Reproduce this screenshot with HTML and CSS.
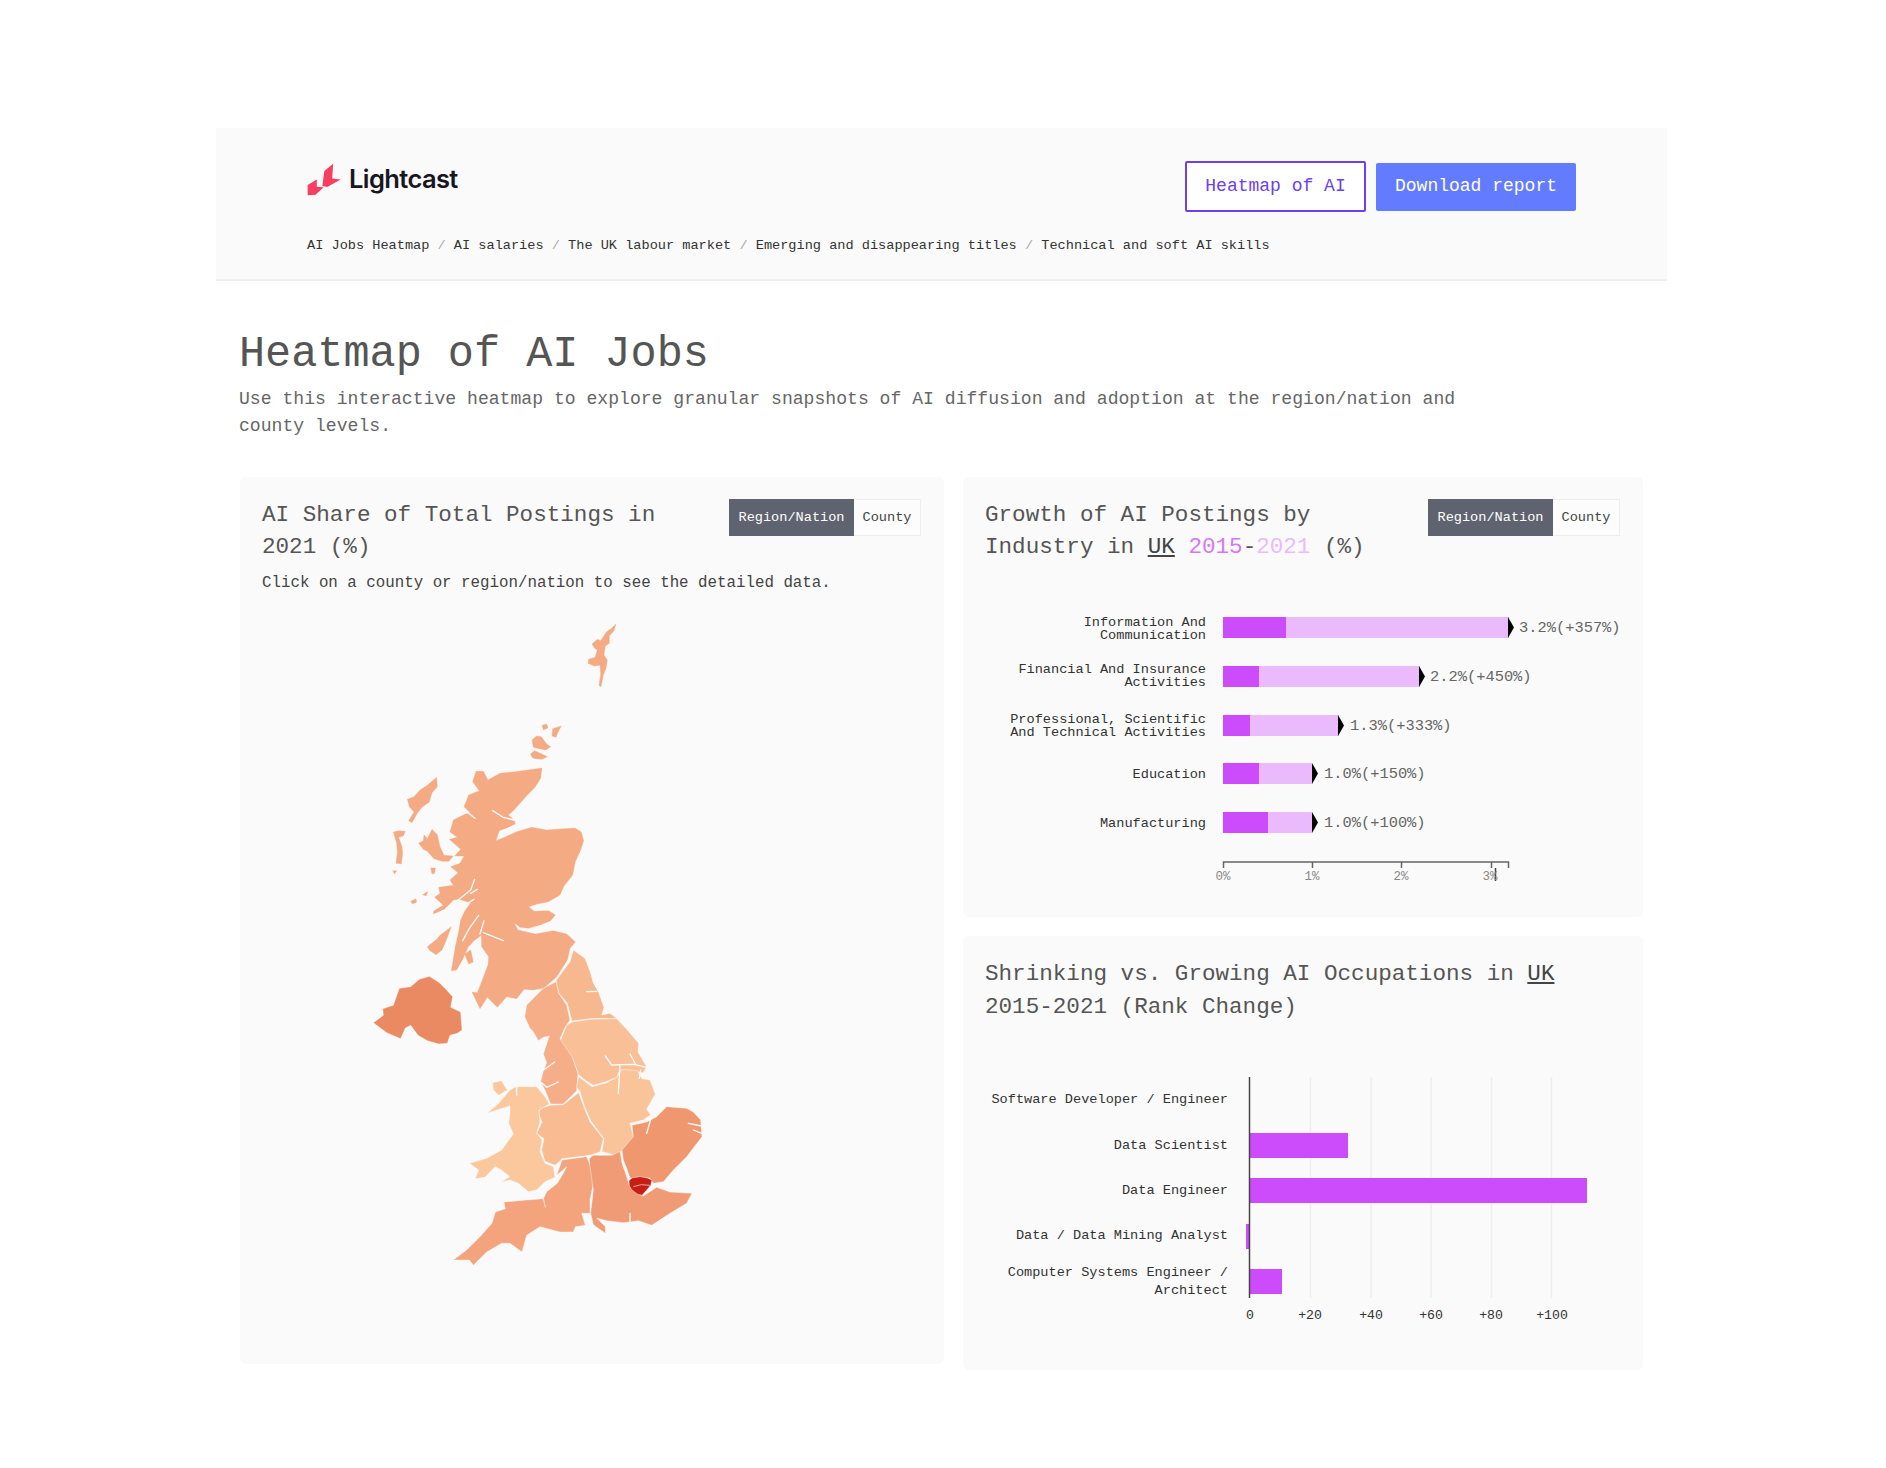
FILE: index.html
```html
<!DOCTYPE html>
<html lang="en">
<head>
<meta charset="utf-8">
<title>Heatmap of AI Jobs</title>
<link rel="stylesheet" href="styles.css">
</head>
<body>
<div class="page">
  <header class="site-header">
    <div class="header-top">
      <a class="logo" href="#">
        <svg class="logo-mark" viewBox="50 38 104 100" aria-hidden="true">
          <polygon points="52,105 80,88 80,110 101,112 76,135 52,136"/>
          <polygon points="130,40 127,85 153,88 112,111 97,108 103,62"/>
        </svg>
        <span class="logo-text">Lightcast</span>
      </a>
      <div class="header-actions">
        <a class="btn btn-outline" href="#">Heatmap of AI</a>
        <a class="btn btn-solid" href="#">Download report</a>
      </div>
    </div>
    <nav class="crumbs"><a href="#">AI Jobs Heatmap</a><span class="sep"> / </span><a href="#">AI salaries</a><span class="sep"> / </span><a href="#">The UK labour market</a><span class="sep"> / </span><a href="#">Emerging and disappearing titles</a><span class="sep"> / </span><a href="#">Technical and soft AI skills</a></nav>
  </header>

  <main class="content">
    <h1 class="page-title">Heatmap of AI Jobs</h1>
    <p class="intro">Use this interactive heatmap to explore granular snapshots of AI diffusion and adoption at the region/nation and county levels.</p>

    <div class="dashboard">
      <section class="panel panel-map">
        <div class="panel-head">
          <h2 class="panel-title">AI Share of Total Postings in 2021 (%)</h2>
          <div class="toggle"><span class="toggle-on">Region/Nation</span><span class="toggle-off">County</span></div>
        </div>
        <p class="hint">Click on a county or region/nation to see the detailed data.</p>
        <svg class="map" viewBox="262 610 660 680" aria-label="Map of UK regions">
          <g transform="translate(340,600) scale(0.33333)" class="land">
            <!-- Shetland & Orkney -->
            <path class="r-sct" d="M828,72 L822,92 L808,108 L808,130 L796,138 L792,165 L802,180 L798,205 L790,225 L783,260 L777,256 L782,222 L780,196 L762,198 L744,190 L746,178 L765,172 L772,150 L764,145 L756,132 L772,118 L782,122 L790,110 L800,95 L815,85 Z"/>
            <path class="r-sct" d="M576,420 L590,408 L604,410 L620,432 L632,440 L618,450 L596,446 L580,442 Z M571,462 L584,452 L606,462 L622,470 L606,478 L586,476 L578,474 Z M606,376 L620,372 L624,384 L610,390 Z M638,386 L664,378 L656,392 L648,412 L636,408 Z"/>
            <!-- Hebrides -->
            <path class="r-sct" d="M202,598 L222,590 L240,570 L262,556 L290,532 L292,560 L276,578 L268,606 L246,622 L232,640 L216,668 L206,662 L222,636 L208,620 Z"/>
            <path class="r-sct" d="M160,696 L176,692 L196,694 L190,708 L176,712 L186,740 L188,762 L184,792 L168,790 L172,758 L170,730 Z"/>
            <path class="r-sct" d="M236,730 L250,722 L252,704 L262,716 L276,688 L292,704 L300,740 L312,766 L340,768 L326,784 L306,784 L282,776 L262,754 L250,748 Z M272,804 L286,804 L284,820 L276,822 Z M158,812 L170,812 L164,822 Z"/>
            <path class="r-sct" d="M212,904 L228,896 L230,906 L218,912 Z M248,884 L264,874 L258,888 Z"/>
            <!-- Mainland Scotland -->
            <path class="r-sct" d="M606,504 L602,535 L585,562 L562,585 L540,610 L520,632 L505,645 L522,660 L526,672 L500,684 L478,692 L468,722 L498,710 L530,695 L575,682 L620,690 L672,686 L705,684 L724,696 L731,722 L722,750 L706,785 L698,825 L672,858 L660,885 L625,905 L592,912 L566,920 L582,934 L626,932 L646,945 L632,962 L600,975 L565,985 L540,982 L522,968 L534,990 L586,1002 L640,992 L680,1002 L706,1026 L690,1045 L682,1080 L650,1130 L612,1164 L580,1170 L552,1168 L530,1196 L500,1190 L472,1222 L442,1192 L420,1226 L396,1176 L412,1178 L425,1145 L444,1095 L446,1070 L425,1040 L424,1006 L402,1022 L384,1042 L368,1078 L350,1110 L334,1112 L346,1040 L356,995 L362,960 L375,932 L392,908 L356,898 L340,900 L316,926 L280,942 L282,932 L310,916 L284,892 L300,880 L296,862 L340,856 L330,840 L354,818 L332,800 L360,790 L372,768 L344,768 L362,748 L328,718 L352,712 L330,696 L340,660 L376,642 L392,640 L372,620 L386,585 L418,572 L398,545 L408,514 L430,514 L444,540 L480,520 L520,516 Z"/>
            <path class="slit" d="M490,1022 L430,998 M432,962 L420,1002 M416,946 L388,985 L368,1022 M404,838 L392,870 L352,902 L318,925 M412,868 L392,880 M402,898 L362,922 M405,655 L376,632 M458,632 L490,652 L522,660"/>
            <path class="r-sct" d="M262,1040 L290,1018 L300,1006 L334,980 L320,1018 L306,1050 L288,1064 L270,1052 Z M374,1062 L392,1050 L400,1086 L386,1092 Z"/>
            <!-- Northern Ireland -->
            <path class="r-ni" d="M100,1268 L130,1246 L128,1226 L160,1216 L178,1165 L212,1160 L238,1138 L268,1129 L298,1148 L318,1168 L338,1190 L332,1222 L362,1236 L366,1290 L352,1300 L330,1306 L322,1330 L296,1332 L262,1322 L234,1306 L212,1276 L196,1284 L182,1316 L140,1298 Z"/>
          </g>
          <g transform="translate(430,950) scale(0.33333)" class="land">
            <path class="r-ne" d="M420,35 L430,0 L465,25 L482,70 L490,100 L505,125 L522,172 L515,195 L540,190 L560,205 L480,206 L426,213 L412,160 L386,128 L378,92 Z"/>
            <path class="r-nw" d="M340,115 L378,95 L386,130 L410,165 L420,210 L405,232 L390,266 L420,300 L444,370 L440,422 L400,462 L362,462 L345,420 L332,395 L340,362 L350,338 L340,312 L358,258 L340,262 L325,272 L310,245 L300,235 L284,200 L290,165 Z"/>
            <path class="r-yo" d="M426,216 L480,208 L560,206 L592,240 L626,280 L624,306 L650,350 L640,368 L570,360 L560,382 L528,395 L490,406 L465,390 L446,374 L426,320 L392,270 L410,226 Z"/>
            <path class="r-em" d="M446,380 L486,410 L530,398 L560,382 L575,358 L622,362 L636,386 L660,390 L676,432 L650,478 L662,494 L640,510 L600,520 L610,560 L590,595 L552,614 L516,605 L522,566 L482,512 L464,470 L450,425 L440,410 Z"/>
            <path class="r-wm" d="M330,476 L360,466 L400,464 L446,428 L462,472 L480,516 L520,566 L510,606 L478,616 L396,626 L376,646 L345,634 L335,600 L342,566 L320,550 L336,516 L326,490 Z"/>
            <path class="r-wa" d="M188,398 L214,392 L232,420 L206,436 L190,420 Z"/>
            <path class="r-wa" d="M172,490 L206,460 L240,420 L258,410 L320,410 L345,440 L358,462 L326,480 L330,515 L320,550 L336,570 L330,605 L345,640 L370,650 L375,682 L345,695 L320,720 L295,725 L265,700 L240,690 L212,696 L240,680 L214,660 L195,650 L165,682 L135,686 L146,660 L118,640 L170,625 L215,600 L250,552 L236,520 L240,490 L240,468 L200,480 Z"/>
            <path class="r-sw" d="M346,772 L340,746 L350,725 L382,700 L400,670 L410,650 L380,676 L396,630 L470,620 L482,650 L490,700 L480,750 L480,790 L455,790 L466,826 L436,830 L430,846 L390,846 L330,830 L290,856 L276,906 L240,880 L215,880 L170,906 L130,946 L118,930 L70,930 L110,900 L150,860 L186,820 L196,786 L226,776 L222,756 L290,750 L340,746 Z"/>
            <path class="r-se" d="M490,616 L546,616 L570,604 L576,640 L590,680 L600,712 L640,738 L680,712 L720,726 L786,730 L770,760 L720,790 L665,826 L625,812 L600,816 L580,818 L530,812 L500,804 L526,830 L526,850 L490,824 L482,790 L490,720 L480,650 L478,625 Z"/>
            <path class="r-ee" d="M606,526 L650,516 L680,500 L710,470 L770,475 L790,486 L812,510 L816,560 L770,620 L730,660 L700,695 L670,700 L660,684 L600,684 L590,655 L580,630 L576,600 L610,560 Z"/>
            <path class="r-lo" d="M597,692 L606,684 L630,680 L652,684 L666,690 L662,706 L652,718 L636,736 L622,732 L606,720 L598,708 Z"/>
            <path class="river" d="M610,710 L634,704 L660,706"/>
            <path class="slit" d="M470,125 L500,124 M526,318 L545,345 L612,343 L650,352 M570,345 L565,430 M600,312 L618,345 M632,360 L628,385 M665,498 L650,550 M338,362 L374,336 M335,398 L350,412 L385,396 M260,412 L260,436 M775,520 L815,528 M790,540 L815,550 M600,816 L600,790"/>
          </g>
        </svg>
      </section>

      <div class="side">
        <section class="panel">
          <div class="panel-head">
            <h2 class="panel-title">Growth of AI Postings by Industry in <u>UK</u> <span class="y2015">2015</span>-<span class="y2021">2021</span> (%)</h2>
            <div class="toggle"><span class="toggle-on">Region/Nation</span><span class="toggle-off">County</span></div>
          </div>
          <svg class="chart chart-growth" viewBox="985 600 636 300" aria-label="Growth of AI postings">
            <g class="label">
              <text x="1206" y="626">Information And</text><text x="1206" y="638.5">Communication</text>
              <text x="1206" y="673">Financial And Insurance</text><text x="1206" y="685.5">Activities</text>
              <text x="1206" y="723">Professional, Scientific</text><text x="1206" y="735.5">And Technical Activities</text>
              <text x="1206" y="777.5">Education</text>
              <text x="1206" y="827">Manufacturing</text>
            </g>
            <g class="bar-light">
              <rect x="1223" y="617" width="286" height="21"/>
              <rect x="1223" y="666" width="197" height="21"/>
              <rect x="1223" y="715" width="116" height="21"/>
              <rect x="1223" y="763" width="89" height="21"/>
              <rect x="1223" y="812" width="89" height="21"/>
            </g>
            <g class="bar-dark">
              <rect x="1223" y="617" width="63" height="21"/>
              <rect x="1223" y="666" width="36" height="21"/>
              <rect x="1223" y="715" width="27" height="21"/>
              <rect x="1223" y="763" width="36" height="21"/>
              <rect x="1223" y="812" width="45" height="21"/>
            </g>
            <g class="marker">
              <polygon points="1508,617 1514,627.5 1508,638"/>
              <polygon points="1419,666 1425,676.5 1419,687"/>
              <polygon points="1338,715 1344,725.5 1338,736"/>
              <polygon points="1312,763 1318,773.5 1312,784"/>
              <polygon points="1312,812 1318,822.5 1312,833"/>
            </g>
            <g class="value">
              <text x="1519" y="632">3.2%(+357%)</text>
              <text x="1430" y="681">2.2%(+450%)</text>
              <text x="1350" y="730">1.3%(+333%)</text>
              <text x="1324" y="778">1.0%(+150%)</text>
              <text x="1324" y="827">1.0%(+100%)</text>
            </g>
            <path class="axis" d="M1223.5,868 V862 H1508.5 V868 M1312.5,862 V868 M1401.5,862 V868 M1491.5,862 V868"/>
            <path class="axis-mark" d="M1495.5,868 V881"/>
            <g class="tick">
              <text x="1223" y="880">0%</text><text x="1312" y="880">1%</text><text x="1401" y="880">2%</text><text x="1490" y="880">3%</text>
            </g>
          </svg>
        </section>

        <section class="panel">
          <h2 class="panel-title panel-title-wide">Shrinking vs. Growing AI Occupations in <u>UK</u> 2015-2021 (Rank Change)</h2>
          <svg class="chart chart-rank" viewBox="985 1060 636 290" aria-label="Rank change of AI occupations">
            <path class="grid" d="M1310.5,1076 V1297 M1371,1076 V1297 M1431,1076 V1297 M1491.5,1076 V1297 M1551.5,1076 V1297"/>
            <g class="bar-dark">
              <rect x="1250" y="1132" width="98" height="25"/>
              <rect x="1250" y="1177" width="337" height="25"/>
              <rect x="1246" y="1223" width="4" height="25"/>
              <rect x="1250" y="1268" width="32" height="25"/>
            </g>
            <path class="baseline" d="M1249.5,1076 V1297"/>
            <g class="label">
              <text x="1228" y="1102">Software Developer / Engineer</text>
              <text x="1228" y="1148">Data Scientist</text>
              <text x="1228" y="1193">Data Engineer</text>
              <text x="1228" y="1238">Data / Data Mining Analyst</text>
              <text x="1228" y="1275">Computer Systems Engineer /</text>
              <text x="1228" y="1293">Architect</text>
            </g>
            <g class="tick tick-dark">
              <text x="1250" y="1318">0</text><text x="1310" y="1318">+20</text><text x="1371" y="1318">+40</text><text x="1431" y="1318">+60</text><text x="1491" y="1318">+80</text><text x="1552" y="1318">+100</text>
            </g>
          </svg>
        </section>
      </div>
    </div>
  </main>
</div>
</body>
</html>
```
FILE: styles.css
```css
* { box-sizing: border-box; }

html, body { margin: 0; background: #fff; }

body {
  font-family: "Liberation Mono", "DejaVu Sans Mono", monospace;
  color: #555;
}

a { color: inherit; text-decoration: none; }

.page {
  width: 1451px;
  margin: 128px 0 0 216px;
  padding-bottom: 99px;
}

.site-header {
  background: #fafafa;
  border-bottom: 2px solid #efefef;
  padding: 33px 91px 23px;
}

.header-top {
  display: flex;
  justify-content: space-between;
  align-items: flex-start;
}

.logo {
  display: flex;
  align-items: center;
  gap: 8px;
  height: 34px;
  margin-top: 1px;
}

.logo-mark { width: 34px; height: 33px; fill: #f73f62; }

.logo-text {
  font-family: Inter, "Liberation Sans", sans-serif;
  font-weight: 600;
  font-size: 25.5px;
  letter-spacing: -0.6px;
  padding-bottom: 2px;
  color: #17171f;
}

.header-actions { display: flex; align-items: center; gap: 10px; }

.btn {
  display: flex;
  align-items: center;
  justify-content: center;
  padding-bottom: 1px;
  font-size: 18px;
  border-radius: 2px;
}

.btn-outline {
  width: 181px;
  height: 51px;
  border: 2px solid #6a40f2;
  color: #6a40f2;
  background: #fff;
}

.btn-solid {
  width: 200px;
  height: 48px;
  background: #637bff;
  color: #fff;
}

.crumbs {
  margin-top: 24px;
  font-size: 13.6px;
  line-height: 20px;
  color: #333;
  white-space: nowrap;
}

.sep { color: #aaa; }

.content { padding: 44px 23px 0 23px; }

.page-title {
  margin: 0;
  font-size: 43.5px;
  font-weight: 400;
  line-height: 60px;
  color: #555;
}

.intro {
  margin: 1px 0 0;
  max-width: 1240px;
  font-size: 18.1px;
  line-height: 26.5px;
  color: #666;
}

.dashboard {
  display: grid;
  grid-template-columns: 704px 680px;
  gap: 19px;
  align-items: start;
  margin: 38px 0 0 1px;
}

.side { display: flex; flex-direction: column; gap: 19px; }

.panel {
  background: #fafafa;
  border-radius: 6px;
  padding: 22px 23px 17px 22px;
}

.panel-map { padding-bottom: 74px; }

.panel-head {
  display: flex;
  justify-content: space-between;
  align-items: flex-start;
  gap: 20px;
}

.panel-title {
  margin: 0;
  max-width: 400px;
  font-size: 22.6px;
  font-weight: 400;
  line-height: 32px;
  color: #555;
}

.panel-title-wide { max-width: none; line-height: 33px; }

.panel-title u { color: #444; }

.y2015 { color: #d876fa; }
.y2021 { color: #ebbafc; }

.toggle {
  display: flex;
  flex: none;
  height: 37px;
  font-size: 13.6px;
  line-height: 37px;
  text-align: center;
}

.toggle-on {
  width: 125px;
  background: #5f6370;
  color: #fff;
}

.toggle-off {
  width: 67px;
  background: #fcfcfc;
  border: 1px solid #eee;
  border-left: 0;
  line-height: 35px;
  color: #444;
}

.hint {
  margin: 8px 0 0;
  font-size: 15.8px;
  line-height: 24px;
  color: #444;
}

.map { display: block; width: 660px; height: 680px; margin-top: 15px; }

.land path { stroke: #fff; stroke-opacity: .6; stroke-width: 2; stroke-linejoin: round; }
.land .r-sct { fill: #f4aa82; stroke: #f4aa82; stroke-opacity: 1; stroke-width: 1; }
.r-ni { fill: #ea8a62; }
.r-ne { fill: #f7b78f; }
.r-nw { fill: #f5ae87; }
.r-yo { fill: #f9c098; }
.r-em { fill: #fac49b; }
.r-wm { fill: #f8bb92; }
.r-wa { fill: #fbc79d; }
.r-sw { fill: #f3a47d; }
.r-se { fill: #f09b75; }
.r-ee { fill: #ef976f; }
.r-lo { fill: #c81e14; }
.land .river { fill: none; stroke-width: 3; }
.land .slit { fill: none; stroke: #fafafa; stroke-opacity: 1; stroke-width: 4; stroke-linecap: round; }

.chart { display: block; width: 636px; }
.chart-growth { height: 300px; margin-top: 37px; }
.chart-rank { height: 290px; margin-top: 37px; margin-bottom: 2px; }

.label text {
  font-family: "Liberation Mono", monospace;
  font-size: 13.6px;
  text-anchor: end;
  fill: #333;
}

.bar-light rect { fill: #ebbafc; }
.bar-dark rect { fill: #cc4bfb; }
.marker polygon { fill: #000; }

.value text {
  font-family: "Liberation Mono", monospace;
  font-size: 15.4px;
  fill: #666;
}

.axis { fill: none; stroke: #666; stroke-width: 1.5; }
.axis-mark { fill: none; stroke: #444; stroke-width: 1.5; }

.tick text {
  font-family: "Liberation Mono", monospace;
  font-size: 12.5px;
  text-anchor: middle;
  fill: #888;
}

.tick-dark text { font-size: 13.2px; fill: #333; }

.grid { fill: none; stroke: #eee; stroke-width: 1.5; }
.baseline { fill: none; stroke: #444; stroke-width: 1.5; }
```
